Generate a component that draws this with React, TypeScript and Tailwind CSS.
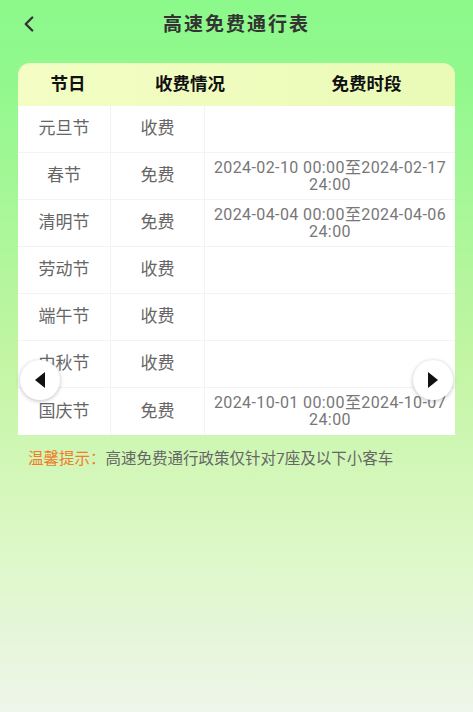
import {ChevronLeft} from "lucide-react";

const rows = [
    {name: "元旦节", fee: "收费", time: ""},
    {name: "春节", fee: "免费", time: "2024-02-10 00:00至2024-02-17 24:00"},
    {name: "清明节", fee: "免费", time: "2024-04-04 00:00至2024-04-06 24:00"},
    {name: "劳动节", fee: "收费", time: ""},
    {name: "端午节", fee: "收费", time: ""},
    {name: "中秋节", fee: "收费", time: ""},
    {name: "国庆节", fee: "免费", time: "2024-10-01 00:00至2024-10-07 24:00"},
];

const App = () => {
    return (
        <div
            className="relative w-[473px] h-[712px] overflow-hidden bg-[linear-gradient(180deg,#8cf98b_0%,#92f88e_12%,#c2f5a3_50%,#dbf8c4_75%,#eef5ea_100%)]"
            style={{fontFamily: 'Roboto, "Noto Sans CJK SC", sans-serif'}}
        >
            <div className="relative h-[50px] flex items-center justify-center">
                <ChevronLeft className="absolute left-[16px] top-[11px] text-[#333]" size={26} strokeWidth={2.2}/>
                <h1 className="text-[19px] font-bold text-[#333] tracking-[2px]">高速免费通行表</h1>
            </div>

            <div className="mx-[18px] mt-[13px] rounded-t-[12px] overflow-hidden">
                <div className="grid grid-cols-[100px_144px_1fr] h-[43px] items-center bg-[linear-gradient(90deg,#f3fdc4,#eafbb6)] text-[17.5px] font-bold text-[#111]">
                    <div className="text-center">节日</div>
                    <div className="text-center">收费情况</div>
                    <div className="text-center pl-4">免费时段</div>
                </div>
                <div className="bg-white">
                    {rows.map(row => (
                        <div key={row.name} className="grid grid-cols-[93px_94px_1fr] h-[47px] border-b border-[#f3f3f3] last:border-b-0">
                            <div className="flex items-center justify-center border-r border-[#f3f3f3] text-[17px] text-[#666]">{row.name}</div>
                            <div className="flex items-center justify-center border-r border-[#f3f3f3] text-[17px] text-[#666]">{row.fee}</div>
                            <div className="pt-[6px] px-[4px] text-center text-[16px] leading-[17px] tracking-[0.4px] text-[#777]">{row.time}</div>
                        </div>
                    ))}
                </div>
            </div>

            <p className="mt-[13px] ml-[28px] text-[15.5px] text-[#666]">
                <span className="text-[#f27c2c]">温馨提示：</span>高速免费通行政策仅针对7座及以下小客车
            </p>

            <button className="absolute left-[20px] top-[360px] w-[40px] h-[40px] rounded-full bg-white shadow-[0_1px_4px_rgba(0,0,0,0.25)] flex items-center justify-center">
                <svg width="14" height="16" viewBox="0 0 14 16"><path d="M12 0 L2 8 L12 16 Z" fill="#111"/></svg>
            </button>
            <button className="absolute left-[413px] top-[360px] w-[40px] h-[40px] rounded-full bg-white shadow-[0_1px_4px_rgba(0,0,0,0.25)] flex items-center justify-center">
                <svg width="14" height="16" viewBox="0 0 14 16"><path d="M2 0 L12 8 L2 16 Z" fill="#111"/></svg>
            </button>
        </div>
    );
};

export default App;
